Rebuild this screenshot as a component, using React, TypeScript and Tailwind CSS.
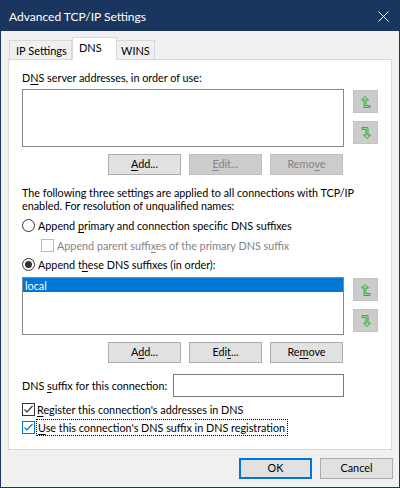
import React from "react";

function Key({ children }: { children: React.ReactNode }) {
  return <span className="underline underline-offset-2 decoration-1">{children}</span>;
}

function Btn({
  children,
  disabled,
  primary,
}: {
  children: React.ReactNode;
  disabled?: boolean;
  primary?: boolean;
}) {
  let cls = "border-[#adadad] bg-[#e1e1e1] text-black";
  if (disabled) cls = "border-[#bfbfbf] bg-[#cccccc] text-[#838383]";
  if (primary) cls = "border-2 border-[#0078d7] bg-[#e1e1e1] text-black";
  return (
    <div className={`flex h-[21px] w-[73px] items-center justify-center border ${cls}`}>
      <span className="leading-none">{children}</span>
    </div>
  );
}

function Arrow({ down }: { down?: boolean }) {
  return (
    <div className="flex h-[23px] w-[25px] items-center justify-center border border-[#c4c4c4] bg-[#cccccc]">
      <svg
        width="10"
        height="12"
        viewBox="0 0 10 12"
        className={down ? "rotate-180" : ""}
      >
        <path
          d="M4 0.5 L7.5 4 L5 4 L5 9.5 L9 9.5 L9 11.5 L3 11.5 L3 4 L0.5 4 Z"
          fill="#8fe08f"
          stroke="#3aa845"
          strokeWidth="1"
        />
      </svg>
    </div>
  );
}

function CheckBox({
  checked,
  disabled,
  hot,
}: {
  checked?: boolean;
  disabled?: boolean;
  hot?: boolean;
}) {
  const border = disabled ? "border-[#bcbcbc]" : hot ? "border-[#0078d7]" : "border-[#333333]";
  const stroke = hot ? "#0078d7" : "#333333";
  return (
    <div className={`flex h-[13px] w-[13px] shrink-0 items-center justify-center border bg-white ${border}`}>
      {checked && (
        <svg width="11" height="11" viewBox="0 0 11 11">
          <path d="M1.5 5.5 L4 8 L9.5 2" fill="none" stroke={stroke} strokeWidth="1.2" />
        </svg>
      )}
    </div>
  );
}

function Radio({ checked }: { checked?: boolean }) {
  return (
    <div className="flex h-[13px] w-[13px] shrink-0 items-center justify-center rounded-full border border-[#333333] bg-white">
      {checked && <div className="h-[7px] w-[7px] rounded-full bg-[#333333]" />}
    </div>
  );
}

function ListWithArrows({ items }: { items: string[] }) {
  return (
    <div className="flex">
      <div className="h-[58px] w-[322px] border border-[#828790] bg-white">
        {items.map((it) => (
          <div key={it} className="flex h-[14px] items-center bg-[#0078d7] px-[2px] text-white">
            {it}
          </div>
        ))}
      </div>
      <div className="ml-[9px] mt-[1px] flex flex-col gap-[8px]">
        <Arrow />
        <Arrow down />
      </div>
    </div>
  );
}

export default function App() {
  return (
    <div className="flex h-[488px] w-[400px] flex-col whitespace-nowrap border border-[#1b365e] bg-[#f0f0f0] font-['Segoe_UI','Lato',sans-serif] text-[10.8px] leading-[15px] text-black">
      {/* title bar */}
      <div className="flex h-[30px] shrink-0 items-center justify-between bg-[#1b365e] pl-[8px] pr-[10px] text-white">
        <span className="text-[12px]">Advanced TCP/IP Settings</span>
        <svg width="11" height="11" viewBox="0 0 11 11">
          <path d="M0.5 0.5 L10.5 10.5 M10.5 0.5 L0.5 10.5" stroke="#ffffff" strokeWidth="1" />
        </svg>
      </div>

      {/* tabs */}
      <div className="ml-[8px] mt-[6px] flex h-[22px] items-end text-[11px]">
        <div className="flex h-[19px] w-[63px] items-center border border-b-0 border-[#d9d9d9] bg-[#f0f0f0] pl-[6px]">
          IP Settings
        </div>
        <div className="relative z-10 -mb-px flex h-[23px] w-[45px] items-start border border-b-0 border-[#d9d9d9] bg-white pl-[6px] pt-[2px]">
          DNS
        </div>
        <div className="flex h-[19px] w-[38px] items-center border border-b-0 border-l-0 border-[#d9d9d9] bg-[#f0f0f0] pl-[4px]">
          WINS
        </div>
      </div>

      {/* panel */}
      <div className="ml-[7px] flex h-[391px] w-[384px] shrink-0 flex-col border border-[#d9d9d9] bg-white pl-[13px]">
        <div className="mt-[10px] h-[15px]">
          D<Key>N</Key>S server addresses, in order of use:
        </div>
        <div className="mt-[4px]">
          <ListWithArrows items={[]} />
        </div>
        <div className="mt-[7px] flex w-[321px] justify-end gap-[8px]">
          <Btn>
            <Key>A</Key>dd...
          </Btn>
          <Btn disabled>
            <Key>E</Key>dit...
          </Btn>
          <Btn disabled>
            Remo<Key>v</Key>e
          </Btn>
        </div>

        <p className="mt-[11px] leading-[13px]">
          The following three settings are applied to all connections with TCP/IP
          <br />
          enabled. For resolution of unqualified names:
        </p>

        <div className="mt-[5px] flex h-[16px] items-center gap-[3px]">
          <Radio />
          <span>
            Append <Key>p</Key>rimary and connection specific DNS suffixes
          </span>
        </div>
        <div className="ml-[19px] mt-[4px] flex h-[16px] items-center gap-[3px] text-[#838383]">
          <CheckBox disabled />
          <span>
            Append parent suffi<Key>x</Key>es of the primary DNS suffix
          </span>
        </div>
        <div className="mt-[3px] flex h-[16px] items-center gap-[3px]">
          <Radio checked />
          <span>
            Append t<Key>h</Key>ese DNS suffixes (in order):
          </span>
        </div>

        <div className="mt-[5px]">
          <ListWithArrows items={["local"]} />
        </div>
        <div className="mt-[7px] flex w-[321px] justify-end gap-[8px]">
          <Btn>
            A<Key>d</Key>d...
          </Btn>
          <Btn>
            Edi<Key>t</Key>...
          </Btn>
          <Btn>
            Re<Key>m</Key>ove
          </Btn>
        </div>

        <div className="mt-[11px] flex h-[23px] items-center">
          <span className="w-[151px]">
            DNS <Key>s</Key>uffix for this connection:
          </span>
          <div className="h-[23px] w-[171px] border border-[#7a7a7a] bg-white" />
        </div>

        <div className="mt-[4px] flex h-[16px] items-center gap-[2px]">
          <CheckBox checked />
          <span>
            <Key>R</Key>egister this connection's addresses in DNS
          </span>
        </div>
        <div className="mt-[2px] flex h-[16px] items-center gap-[1px]">
          <CheckBox checked hot />
          <span className="border border-dotted border-black pl-px pr-[2px]">
            <Key>U</Key>se this connection's DNS suffix in DNS registration
          </span>
        </div>
      </div>

      {/* footer buttons */}
      <div className="mr-[6px] mt-[8px] flex justify-end gap-[8px]">
        <Btn primary>OK</Btn>
        <Btn>Cancel</Btn>
      </div>
    </div>
  );
}
